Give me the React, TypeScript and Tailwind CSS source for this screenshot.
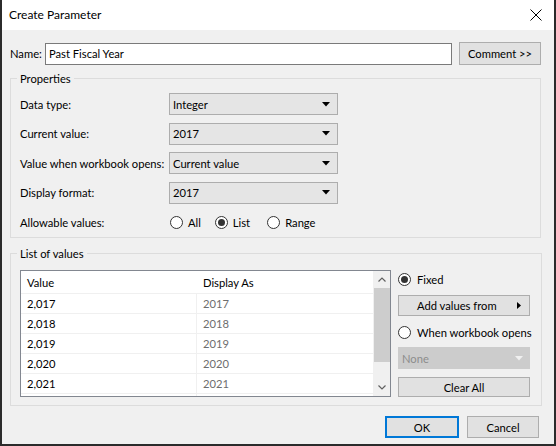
import type { ReactNode } from "react";

const Radio = ({ checked = false }: { checked?: boolean }) => (
  <span className="flex h-[13px] w-[13px] shrink-0 items-center justify-center rounded-full border border-[#333333] bg-white">
    {checked && <span className="h-[7px] w-[7px] rounded-full bg-[#333333]" />}
  </span>
);

const Caret = ({ color = "#000000" }: { color?: string }) => (
  <svg width="8" height="5" viewBox="0 0 8 5">
    <path d="M0 0 H8 L4 4.5 Z" fill={color} />
  </svg>
);

const Select = ({ value }: { value: string }) => (
  <div className="flex h-[22px] w-[169px] items-center justify-between border border-[#adadad] bg-[#e5e5e5] pl-[3px] pr-[7px]">
    <span>{value}</span>
    <Caret />
  </div>
);

const Row = ({ label, children }: { label: string; children: ReactNode }) => (
  <div className="flex h-[22px] items-center">
    <span className="w-[149px] shrink-0">{label}</span>
    {children}
  </div>
);

const rows = [
  ["2,017", "2017"],
  ["2,018", "2018"],
  ["2,019", "2019"],
  ["2,020", "2020"],
  ["2,021", "2021"],
];

const App = () => {
  return (
    <div className="flex h-[446px] w-[556px] flex-col whitespace-nowrap border-x-2 border-b-2 border-[#2b2b2b] bg-[#f0f0f0] font-['Lato',sans-serif] text-[11.2px] leading-none text-black">
      {/* title bar */}
      <div className="flex h-[30px] shrink-0 items-center justify-between bg-white pl-[7px] pr-[12px]">
        <span className="text-[12px]">Create Parameter</span>
        <svg width="12" height="12" viewBox="0 0 12 12">
          <path d="M0.5 0.5 L11.5 11.5 M11.5 0.5 L0.5 11.5" stroke="#000" strokeWidth="1" />
        </svg>
      </div>

      <div className="flex flex-1 flex-col pl-[8px] pr-[13px]">
        {/* name row */}
        <div className="mt-[12px] flex h-[23px] items-center">
          <span className="w-[35px] shrink-0">Name:</span>
          <div className="flex h-[22px] flex-1 items-center border border-[#7a7a7a] bg-white px-[3px]">
            Past Fiscal Year
          </div>
          <button className="ml-[7px] h-[23px] w-[82px] border border-[#adadad] bg-[#e1e1e1]">
            Comment &gt;&gt;
          </button>
        </div>

        {/* properties */}
        <fieldset className="mt-[8px] border border-[#dcdcdc] pb-[4px] pl-[9px] pt-[9px]">
          <legend className="-ml-[3px] px-[3px]">Properties</legend>
          <div className="flex flex-col gap-[7.5px]">
            <Row label="Data type:">
              <Select value="Integer" />
            </Row>
            <Row label="Current value:">
              <Select value="2017" />
            </Row>
            <Row label="Value when workbook opens:">
              <Select value="Current value" />
            </Row>
            <Row label="Display format:">
              <Select value="2017" />
            </Row>
            <Row label="Allowable values:">
              <div className="ml-[1px] flex items-center">
                <Radio />
                <span className="ml-[5px]">All</span>
                <span className="ml-[14px]">
                  <Radio checked />
                </span>
                <span className="ml-[5px]">List</span>
                <span className="ml-[17px]">
                  <Radio />
                </span>
                <span className="ml-[5px]">Range</span>
              </div>
            </Row>
          </div>
        </fieldset>

        {/* list of values */}
        <fieldset className="mt-[10px] border border-[#dcdcdc] pb-[8px] pl-[9px] pr-[11px] pt-[11px]">
          <legend className="-ml-[3px] px-[3px]">List of values</legend>
          <div className="flex gap-[7px]">
            <div className="flex h-[127px] w-[371px] border border-[#828790] bg-white">
              <div className="flex flex-1 flex-col overflow-hidden">
                <div className="flex h-[22px] shrink-0 items-center">
                  <span className="w-[176px] pl-[6px]">Value</span>
                  <span className="pl-[6px]">Display As</span>
                </div>
                {rows.map(([v, d]) => (
                  <div key={v} className="flex h-[20px] shrink-0 items-center border-t border-[#f0f0f0]">
                    <span className="flex h-full w-[176px] items-center border-r border-[#f0f0f0] pl-[6px]">{v}</span>
                    <span className="pl-[6px] text-[#6d6d6d]">{d}</span>
                  </div>
                ))}
                <div className="flex h-[20px] shrink-0 border-t border-[#f0f0f0]">
                  <span className="w-[176px] border-r border-[#f0f0f0]" />
                </div>
              </div>
              {/* scrollbar */}
              <div className="flex w-[17px] shrink-0 flex-col bg-[#f0f0f0]">
                <div className="flex h-[17px] items-center justify-center">
                  <svg width="8" height="5" viewBox="0 0 8 5">
                    <path d="M0.5 4.5 L4 1 L7.5 4.5" stroke="#606060" strokeWidth="1.2" fill="none" />
                  </svg>
                </div>
                <div className="ml-[1px] h-[74px] bg-[#cdcdcd]" />
                <div className="flex-1" />
                <div className="flex h-[17px] items-center justify-center">
                  <svg width="8" height="5" viewBox="0 0 8 5">
                    <path d="M0.5 0.5 L4 4 L7.5 0.5" stroke="#606060" strokeWidth="1.2" fill="none" />
                  </svg>
                </div>
              </div>
            </div>

            <div className="flex w-[132px] flex-col">
              <div className="flex h-[18px] items-center">
                <Radio checked />
                <span className="ml-[6px]">Fixed</span>
              </div>
              <button className="mt-[7px] flex h-[21px] items-center justify-between border border-[#adadad] bg-[#e1e1e1] pl-[18px] pr-[8px]">
                <span>Add values from</span>
                <svg width="4" height="7" viewBox="0 0 4 7">
                  <path d="M0 0 L4 3.5 L0 7 Z" fill="#000" />
                </svg>
              </button>
              <div className="mt-[7px] flex h-[18px] items-center">
                <Radio />
                <span className="ml-[6px]">When workbook opens</span>
              </div>
              <div className="mt-[6px] flex h-[22px] items-center justify-between border border-[#cccccc] bg-[#cccccc] pl-[3px] pr-[6px] text-[#8c8c8c]">
                <span>None</span>
                <Caret color="#f0f0f0" />
              </div>
              <button className="mt-[8px] h-[20px] border border-[#adadad] bg-[#e1e1e1]">Clear All</button>
            </div>
          </div>
        </fieldset>

        {/* footer */}
        <div className="mt-[10px] flex justify-end gap-[8px] pr-[2px]">
          <button className="h-[22px] w-[74px] border-2 border-[#0078d7] bg-[#e1e1e1]">OK</button>
          <button className="h-[22px] w-[72px] border border-[#adadad] bg-[#e1e1e1]">Cancel</button>
        </div>
      </div>
    </div>
  );
};

export default App;
